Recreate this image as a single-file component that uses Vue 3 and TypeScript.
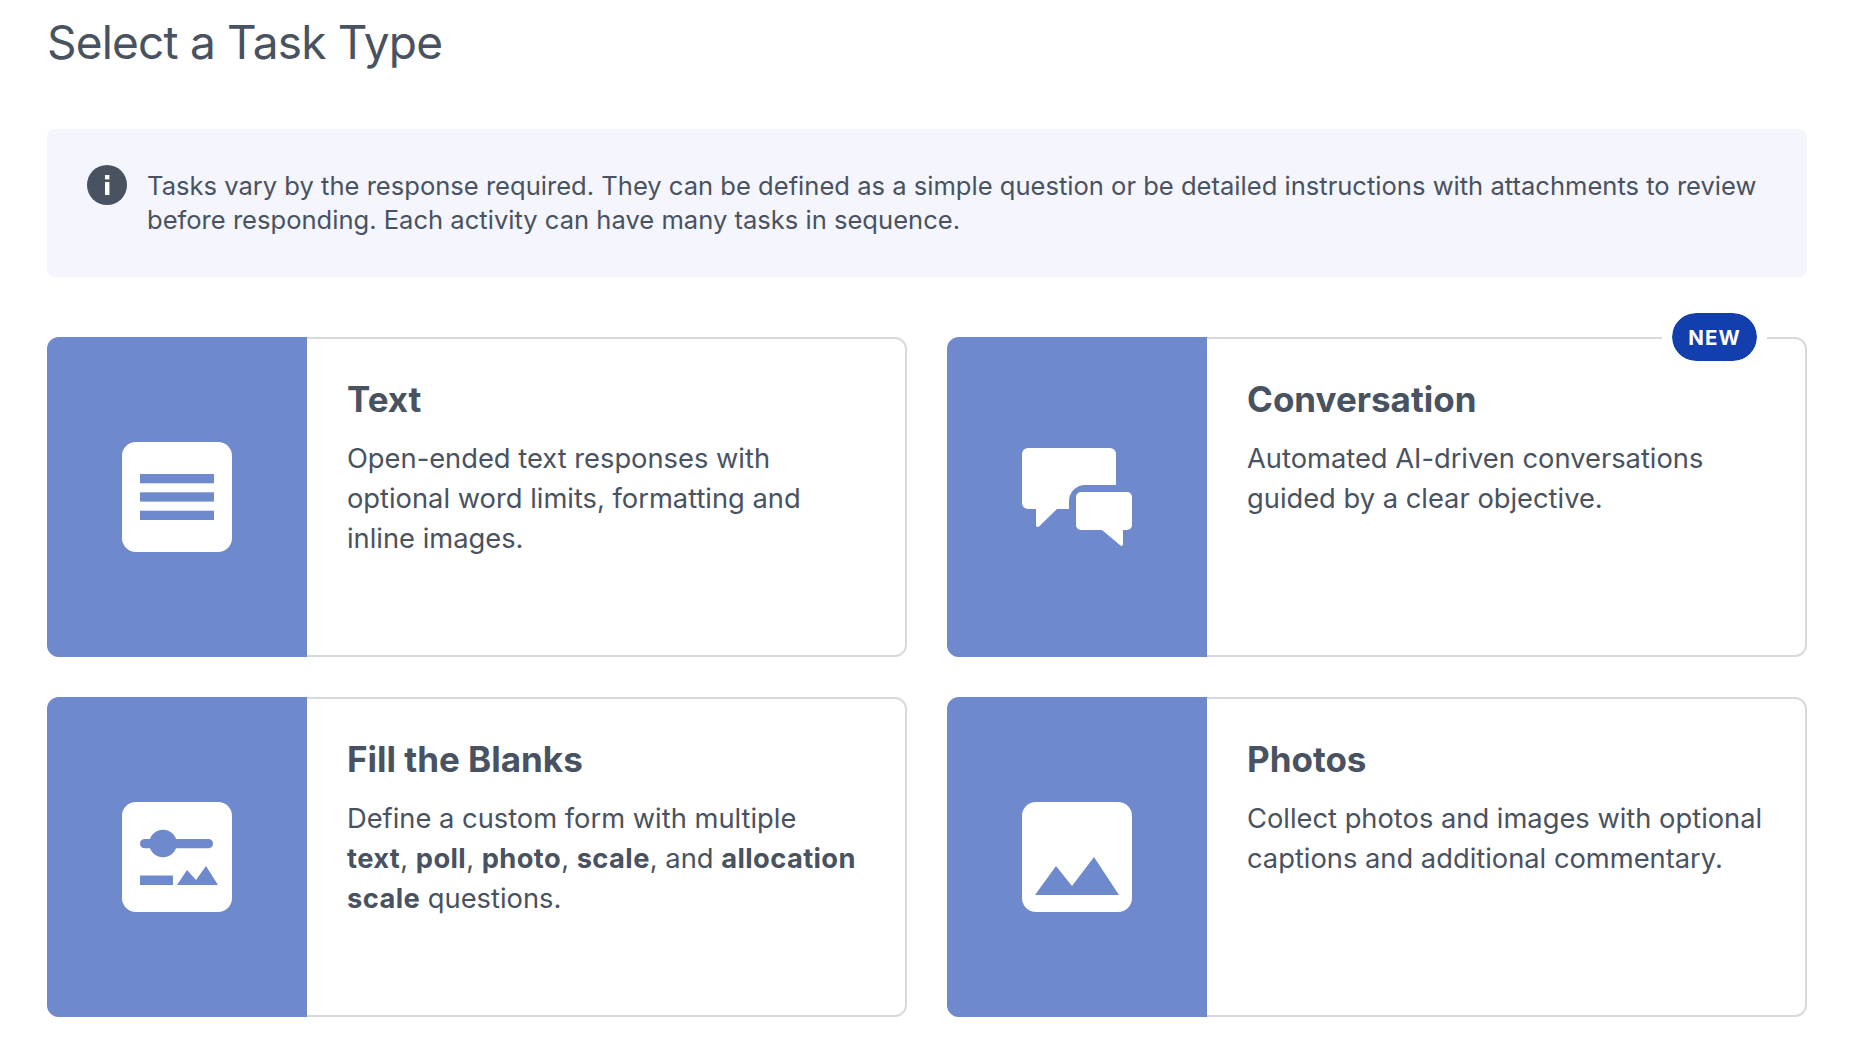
<script setup lang="ts">
interface TaskType {
  title: string
  icon: 'text' | 'chat' | 'form' | 'photo'
  isNew?: boolean
}

const tasks: TaskType[] = [
  { title: 'Text', icon: 'text' },
  { title: 'Conversation', icon: 'chat', isNew: true },
  { title: 'Fill the Blanks', icon: 'form' },
  { title: 'Photos', icon: 'photo' }
]
</script>

<template>
  <main class="page">
    <h1 class="heading">Select a Task Type</h1>

    <div class="notice">
      <svg class="notice-icon" viewBox="0 0 40 40" aria-hidden="true">
        <circle cx="20" cy="20" r="20" fill="#495260" />
        <rect x="18" y="17" width="4.4" height="13" fill="#fff" />
        <rect x="18" y="10" width="4.4" height="4.4" fill="#fff" />
      </svg>
      <p>
        Tasks vary by the response required. They can be defined as a simple question or be detailed
        instructions with attachments to review before responding. Each activity can have many tasks
        in sequence.
      </p>
    </div>

    <section class="grid">
      <article v-for="task in tasks" :key="task.title" class="card">
        <div class="card-side">
          <svg v-if="task.icon === 'text'" class="icon" viewBox="0 0 110 110" aria-hidden="true">
            <rect width="110" height="110" rx="14" fill="#fff" />
            <rect x="18" y="32" width="74" height="9.3" fill="#6f89cd" />
            <rect x="18" y="50.3" width="74" height="9.3" fill="#6f89cd" />
            <rect x="18" y="68.7" width="74" height="9.3" fill="#6f89cd" />
          </svg>
          <svg v-else-if="task.icon === 'chat'" class="icon" viewBox="0 0 110 110" aria-hidden="true">
            <path
              d="M6 6H88a6 6 0 0 1 6 6V43H63a16 16 0 0 0-16 16V67H35L17 84.500a1.800 1.800 0 0 1-3-1.300V67H6a6 6 0 0 1-6-6V12a6 6 0 0 1 6-6Z"
              fill="#fff"
            />
            <path
              d="M59 50H105a5 5 0 0 1 5 5V83a5 5 0 0 1-5 5H101V102.500a1.500 1.500 0 0 1-2.500 1.100L80 88H59a5 5 0 0 1-5-5V55a5 5 0 0 1 5-5Z"
              fill="#fff"
            />
          </svg>
          <svg v-else-if="task.icon === 'form'" class="icon" viewBox="0 0 110 110" aria-hidden="true">
            <rect width="110" height="110" rx="14" fill="#fff" />
            <rect x="18" y="37" width="73" height="9.300" rx="4.650" fill="#6f89cd" />
            <circle cx="41" cy="41.500" r="13.800" fill="#6f89cd" />
            <rect x="18" y="73.500" width="33" height="9.500" fill="#6f89cd" />
            <path d="M55 83 65 68 74 78 84 64 96 83Z" fill="#6f89cd" />
          </svg>
          <svg v-else class="icon" viewBox="0 0 110 110" aria-hidden="true">
            <rect width="110" height="110" rx="14" fill="#fff" />
            <path d="M13 93 34 64 50 84 72 55 97 93Z" fill="#6f89cd" />
          </svg>
        </div>
        <div class="card-body">
          <h2>{{ task.title }}</h2>
          <p v-if="task.icon === 'text'">
            Open-ended text responses with optional word limits, formatting and inline images.
          </p>
          <p v-else-if="task.icon === 'chat'">
            Automated AI-driven conversations guided by a clear objective.
          </p>
          <p v-else-if="task.icon === 'form'" class="form-desc">
            Define a custom form with multiple <b>text</b>, <b>poll</b>, <b>photo</b>, <b>scale</b>,
            and <b>allocation</b> <b>scale</b> questions.
          </p>
          <p v-else>Collect photos and images with optional captions and additional commentary.</p>
        </div>
        <span v-if="task.isNew" class="badge">NEW</span>
      </article>
    </section>
  </main>
</template>

<style>
html,
body {
  background: #fff;
}
</style>

<style scoped>
.page {
  box-sizing: border-box;
  height: 1048px;
  padding: 14px 49px 0 47px;
  font-family: Inter, "Liberation Sans", sans-serif;
  color: #495260;
  overflow: hidden;
}

.heading {
  margin: 0 0 58px;
  font-size: 46px;
  line-height: 57px;
  font-weight: 400;
  letter-spacing: -0.8px;
}

.notice {
  display: flex;
  gap: 20px;
  padding: 40px 40px;
  background: #f4f5fd;
  border-radius: 8px;
  font-size: 25.57px;
  line-height: 34px;
}

.notice p {
  margin: 0;
}

.notice-icon {
  flex: none;
  width: 40px;
  height: 40px;
  margin-top: -4px;
}

.grid {
  display: grid;
  grid-template-columns: 1fr 1fr;
  gap: 40px;
  margin-top: 60px;
}

.card {
  position: relative;
  display: flex;
  height: 320px;
  box-sizing: border-box;
  border: 2px solid #d8d9dd;
  border-radius: 12px;
  background: #fff;
}

.card-side {
  display: flex;
  align-items: center;
  justify-content: center;
  flex: none;
  width: 260px;
  margin: -2px 0 -2px -2px;
  background: #6f89cd;
  border-radius: 12px 0 0 12px;
}

.icon {
  width: 110px;
  height: 110px;
}

.card-body {
  padding: 37px 38px 0 40px;
}

.card-body h2 {
  margin: 0 0 17px;
  font-size: 35px;
  line-height: 46px;
  font-weight: 650;
}

.card-body p {
  margin: 0;
  font-size: 27.3px;
  line-height: 40px;
}

.card-body .form-desc {
  max-width: 516px;
}

.card-body b {
  font-weight: 700;
  letter-spacing: 0.4px;
}

.badge {
  position: absolute;
  top: -26px;
  right: 48px;
  width: 85px;
  height: 48px;
  display: flex;
  align-items: center;
  justify-content: center;
  background: #123fad;
  border-radius: 24px;
  outline: 10px solid #fff;
  outline-offset: 0;
  color: #fff;
  font-size: 20.5px;
  font-weight: 700;
  letter-spacing: 1px;
}
</style>
